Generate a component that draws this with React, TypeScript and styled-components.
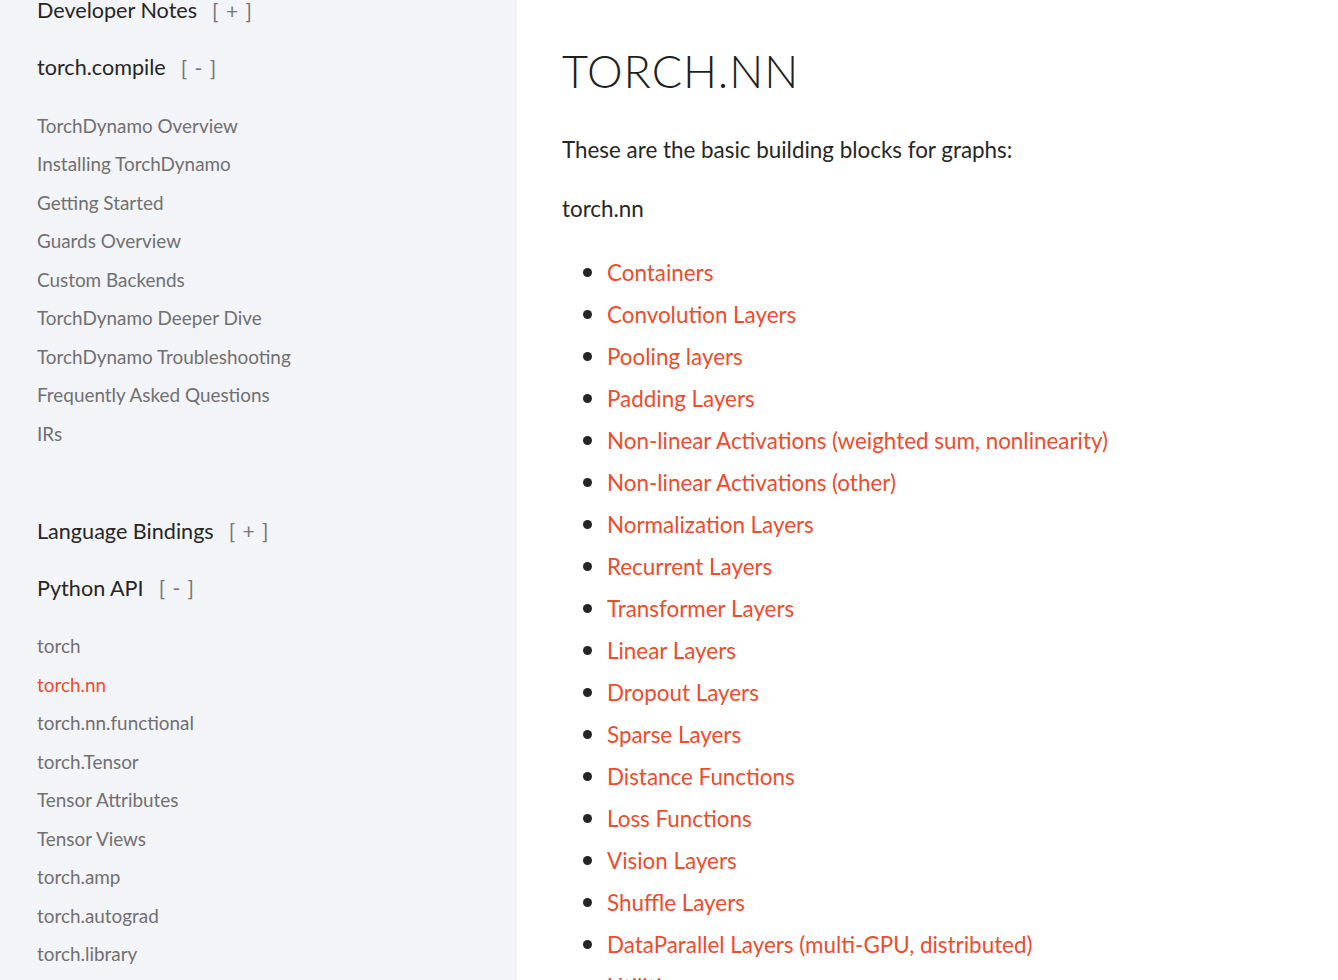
import React from "react";
import styled, { createGlobalStyle } from "styled-components";

const Global = createGlobalStyle`
  html, body { margin: 0; padding: 0; background: #ffffff; }
  body { font-family: Lato, "Open Sans", sans-serif; overflow: hidden; }
  * { box-sizing: border-box; }
`;

const Page = styled.div`
  display: flex;
  width: 1338px;
  height: 980px;
  overflow: hidden;
`;

const Sidebar = styled.nav`
  width: 517px;
  flex: none;
  background: #f3f4f7;
  padding: 0 0 0 37px;
  margin-top: -10px;
  height: 990px;
  overflow: hidden;
`;

const Caption = styled.div<{ $top?: number }>`
  display: flex;
  align-items: center;
  height: 40px;
  margin-top: ${(p) => p.$top ?? 0}px;
  font-size: 21.6px;
  color: #262626;
  white-space: nowrap;
`;

const Toggle = styled.span`
  margin-left: 15px;
  color: #77777a;
  font-size: 21px;
  letter-spacing: 1px;
`;

const NavList = styled.ul<{ $top: number }>`
  list-style: none;
  margin: ${(p) => p.$top}px 0 0;
  padding: 0;
`;

const NavItem = styled.li<{ $active?: boolean }>`
  height: 38.5px;
  display: flex;
  align-items: center;
  font-size: 18.9px;
  color: ${(p) => (p.$active ? "#ee4c2c" : "#707072")};
  white-space: nowrap;
`;

const Main = styled.main`
  flex: 1;
  padding: 46px 0 0 45px;
  color: #262626;
`;

const Title = styled.h1`
  margin: 0;
  font-weight: 300;
  font-size: 45px;
  letter-spacing: 0.9px;
  line-height: 50px;
  color: #1f1f1f;
`;

const Lead = styled.p<{ $top: number }>`
  margin: ${(p) => p.$top}px 0 0;
  font-size: 22.4px;
  line-height: 30px;
`;

const List = styled.ul`
  margin: 26px 0 0;
  padding: 0 0 0 45px;
`;

const Item = styled.li`
  height: 42px;
  font-size: 22.4px;
  line-height: 42px;
  color: #262626;
  &::marker { font-size: 26px; }
`;

const Link = styled.a`
  color: #ee4c2c;
  text-decoration: none;
`;

const compileItems = [
  "TorchDynamo Overview",
  "Installing TorchDynamo",
  "Getting Started",
  "Guards Overview",
  "Custom Backends",
  "TorchDynamo Deeper Dive",
  "TorchDynamo Troubleshooting",
  "Frequently Asked Questions",
  "IRs",
];

const apiItems = [
  "torch",
  "torch.nn",
  "torch.nn.functional",
  "torch.Tensor",
  "Tensor Attributes",
  "Tensor Views",
  "torch.amp",
  "torch.autograd",
  "torch.library",
];

const links = [
  "Containers",
  "Convolution Layers",
  "Pooling layers",
  "Padding Layers",
  "Non-linear Activations (weighted sum, nonlinearity)",
  "Non-linear Activations (other)",
  "Normalization Layers",
  "Recurrent Layers",
  "Transformer Layers",
  "Linear Layers",
  "Dropout Layers",
  "Sparse Layers",
  "Distance Functions",
  "Loss Functions",
  "Vision Layers",
  "Shuffle Layers",
  "DataParallel Layers (multi-GPU, distributed)",
  "Utilities",
];

export default function App() {
  return (
    <>
      <Global />
      <Page>
        <Sidebar>
          <Caption>
            Developer Notes<Toggle>[ + ]</Toggle>
          </Caption>
          <Caption $top={17}>
            torch.compile<Toggle>[ - ]</Toggle>
          </Caption>
          <NavList $top={19}>
            {compileItems.map((t) => (
              <NavItem key={t}>{t}</NavItem>
            ))}
          </NavList>
          <Caption $top={58}>
            Language Bindings<Toggle>[ + ]</Toggle>
          </Caption>
          <Caption $top={17}>
            Python API<Toggle>[ - ]</Toggle>
          </Caption>
          <NavList $top={19}>
            {apiItems.map((t) => (
              <NavItem key={t} $active={t === "torch.nn"}>
                {t}
              </NavItem>
            ))}
          </NavList>
        </Sidebar>
        <Main>
          <Title>TORCH.NN</Title>
          <Lead $top={39}>These are the basic building blocks for graphs:</Lead>
          <Lead $top={29}>torch.nn</Lead>
          <List>
            {links.map((t) => (
              <Item key={t}>
                <Link href="#">{t}</Link>
              </Item>
            ))}
          </List>
        </Main>
      </Page>
    </>
  );
}
